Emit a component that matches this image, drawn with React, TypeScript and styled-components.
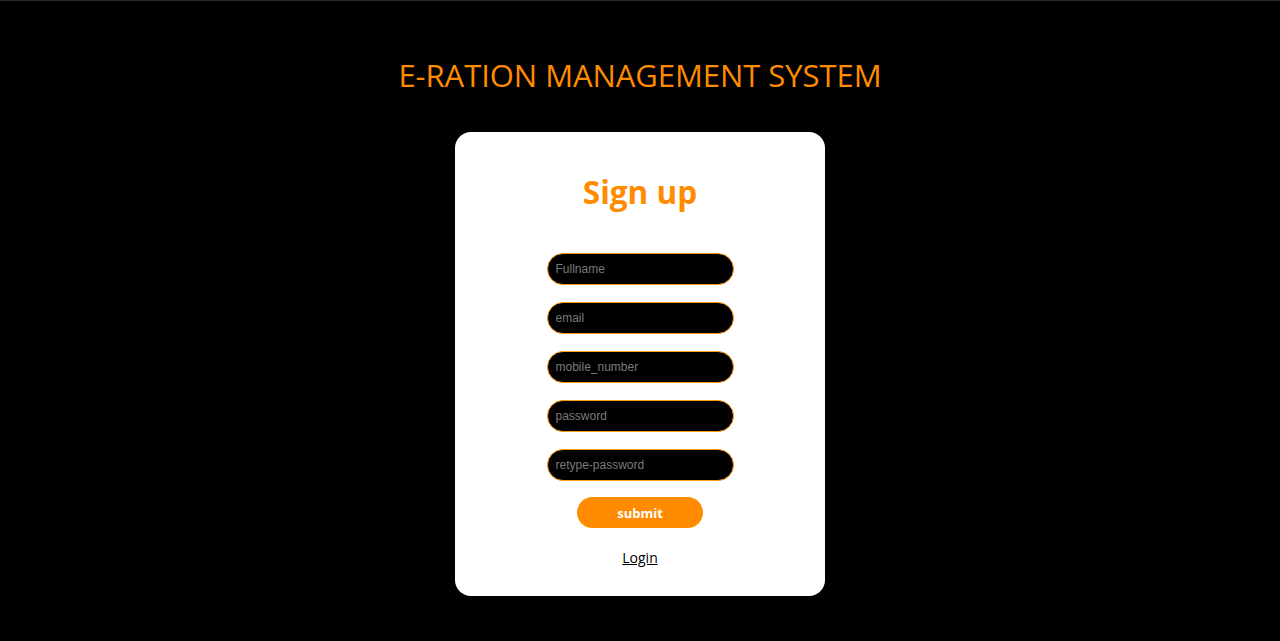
import React from "react";
import styled, { createGlobalStyle } from "styled-components";

const Global = createGlobalStyle`
  html, body { margin: 0; padding: 0; background: #000; }
  body { font-family: "Open Sans", "Liberation Sans", sans-serif; }
  * { box-sizing: border-box; }
`;

const Page = styled.div`
  min-height: 641px;
  background: #000;
  border-top: 1px solid #2b2b2b;
  display: flex;
  flex-direction: column;
  align-items: center;
`;

const Title = styled.h1`
  margin: 54px 0 0;
  font-family: "Open Sans", sans-serif;
  font-weight: 400;
  font-size: 31px;
  line-height: 40px;
  color: #ff8c00;
  letter-spacing: -0.05px;
`;

const Card = styled.form`
  margin-top: 37px;
  width: 370px;
  height: 464px;
  background: #fff;
  border-radius: 16px;
  display: flex;
  flex-direction: column;
  align-items: center;
  padding-top: 38px;
`;

const Heading = styled.h2`
  margin: 0 0 39px;
  font-family: "Open Sans", sans-serif;
  font-weight: 700;
  font-size: 31.5px;
  line-height: 44px;
  color: #ff8c00;
`;

const Fields = styled.div`
  display: flex;
  flex-direction: column;
  gap: 17px;
`;

const Input = styled.input`
  width: 187px;
  height: 32px;
  border: 1px solid #ff9a1a;
  border-radius: 16px;
  background: #000;
  color: #ccc;
  padding: 0 8px;
  font-family: "Liberation Sans", Arial, sans-serif;
  font-size: 12px;
  outline: none;
  &::placeholder { color: #7a7a7a; }
`;

const Submit = styled.button`
  margin-top: 16px;
  width: 126px;
  height: 31px;
  border: none;
  border-radius: 16px;
  background: #ff8c00;
  color: #fff;
  font-family: "Open Sans", sans-serif;
  font-weight: 700;
  font-size: 13px;
  cursor: pointer;
`;

const LoginLink = styled.a`
  margin-top: 20px;
  color: #000;
  font-family: "Open Sans", sans-serif;
  font-size: 14px;
  text-decoration: underline;
`;

const fields = ["Fullname", "email", "mobile_number", "password", "retype-password"];

export default function App() {
  return (
    <>
      <Global />
      <Page>
        <Title>E-RATION MANAGEMENT SYSTEM</Title>
        <Card onSubmit={(e) => e.preventDefault()}>
          <Heading>Sign up</Heading>
          <Fields>
            {fields.map((f) => (
              <Input key={f} placeholder={f} type={f.includes("password") ? "password" : "text"} />
            ))}
          </Fields>
          <Submit type="submit">submit</Submit>
          <LoginLink href="#">Login</LoginLink>
        </Card>
      </Page>
    </>
  );
}
